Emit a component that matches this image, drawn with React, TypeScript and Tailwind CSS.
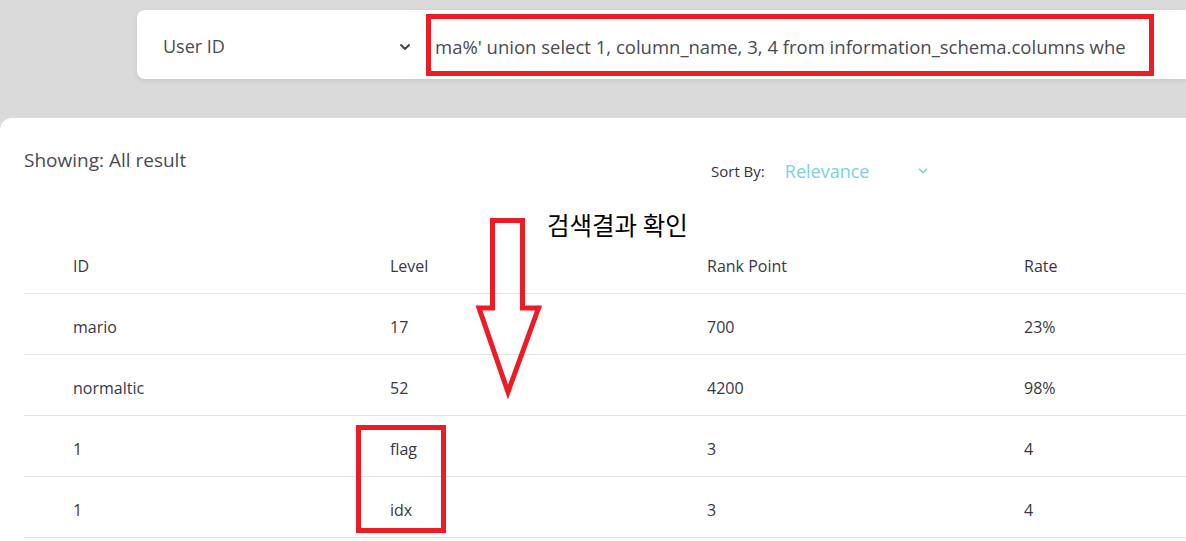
import { ChevronDown } from 'lucide-react';

const ROWS = [
  ['mario', '17', '700', '23%'],
  ['normaltic', '52', '4200', '98%'],
  ['1', 'flag', '3', '4'],
  ['1', 'idx', '3', '4'],
];

// the input is scrolled, only this part is visible
const QUERY = "ma%' union select 1, column_name, 3, 4 from information_schema.columns whe";

function Row({ cells, head }: { cells: string[]; head?: boolean }) {
  return (
    <div className={`flex ${head ? 'h-[96px] items-end pb-[15px]' : 'h-[61px] items-center pt-[5px]'} border-b border-[#e2e2e6]`}>
      {cells.map((c, i) => (
        <div key={i} className="w-[317px] shrink-0 pl-[49px] text-[16px] leading-[24px] text-[#383846]">
          {c}
        </div>
      ))}
    </div>
  );
}

export default function App() {
  return (
    <div className="relative w-[1186px] h-[541px] overflow-hidden bg-[#dadada] font-['Open_Sans',sans-serif]">
      {/* search bar */}
      <div className="h-[118px] pt-[10px] pl-[137px]">
        <div className="flex h-[69px] items-center rounded-l-lg bg-white pt-[4px] shadow-[0_2px_6px_rgba(0,0,0,0.08)]">
          <div className="flex w-[290px] shrink-0 items-center justify-between pl-[26px] pr-[14px]">
            <span className="text-[18px] text-[#4a4a55]">User ID</span>
            <ChevronDown size={16} strokeWidth={3} className="text-[#44444c]" />
          </div>
          <div className="ml-[8px] whitespace-nowrap text-[18.5px] text-[#4a4a55]">{QUERY}</div>
        </div>
      </div>
      <div className="absolute left-[426px] top-[14px] h-[62px] w-[728px] border-[5px] border-[#ed1c24]" />

      {/* results panel */}
      <div className="relative h-[423px] rounded-tl-xl bg-white pt-[30px]">
        <div className="flex h-[50px] items-start pl-[24px]">
          <div className="w-[687px] shrink-0 text-[19px] leading-[24px] text-[#4a4a55]">Showing: All result</div>
          <div className="mt-[10px] flex items-center">
            <span className="text-[15px] text-[#33333d]">Sort By:</span>
            <span className="ml-[20px] w-[131px] text-[18px] text-[#7ecfdf]">Relevance</span>
            <ChevronDown size={14} strokeWidth={3} className="-mt-[2px] text-[#7ecfdf]" />
          </div>
        </div>

        <div className="ml-[24px]">
          <Row head cells={['ID', 'Level', 'Rank Point', 'Rate']} />
          {ROWS.map((r, i) => (
            <Row key={i} cells={r} />
          ))}
        </div>

        {/* annotations */}
        <div className="absolute left-[547px] top-[91px] text-[24.5px] leading-[32px] text-black font-['Noto_Sans_CJK_KR',sans-serif]">
          검색결과 확인
        </div>
        <svg className="absolute left-[470px] top-[96px]" width="76" height="186" viewBox="470 214 76 186">
          <polygon
            points="492.5,220.5 522.5,220.5 522.5,308 538.5,308 508,392 479,308 492.5,308"
            fill="none"
            stroke="#ed1c24"
            strokeWidth="5"
          />
        </svg>
        <div className="absolute left-[356px] top-[307px] h-[108px] w-[90px] border-[5px] border-[#ed1c24]" />
      </div>
    </div>
  );
}
